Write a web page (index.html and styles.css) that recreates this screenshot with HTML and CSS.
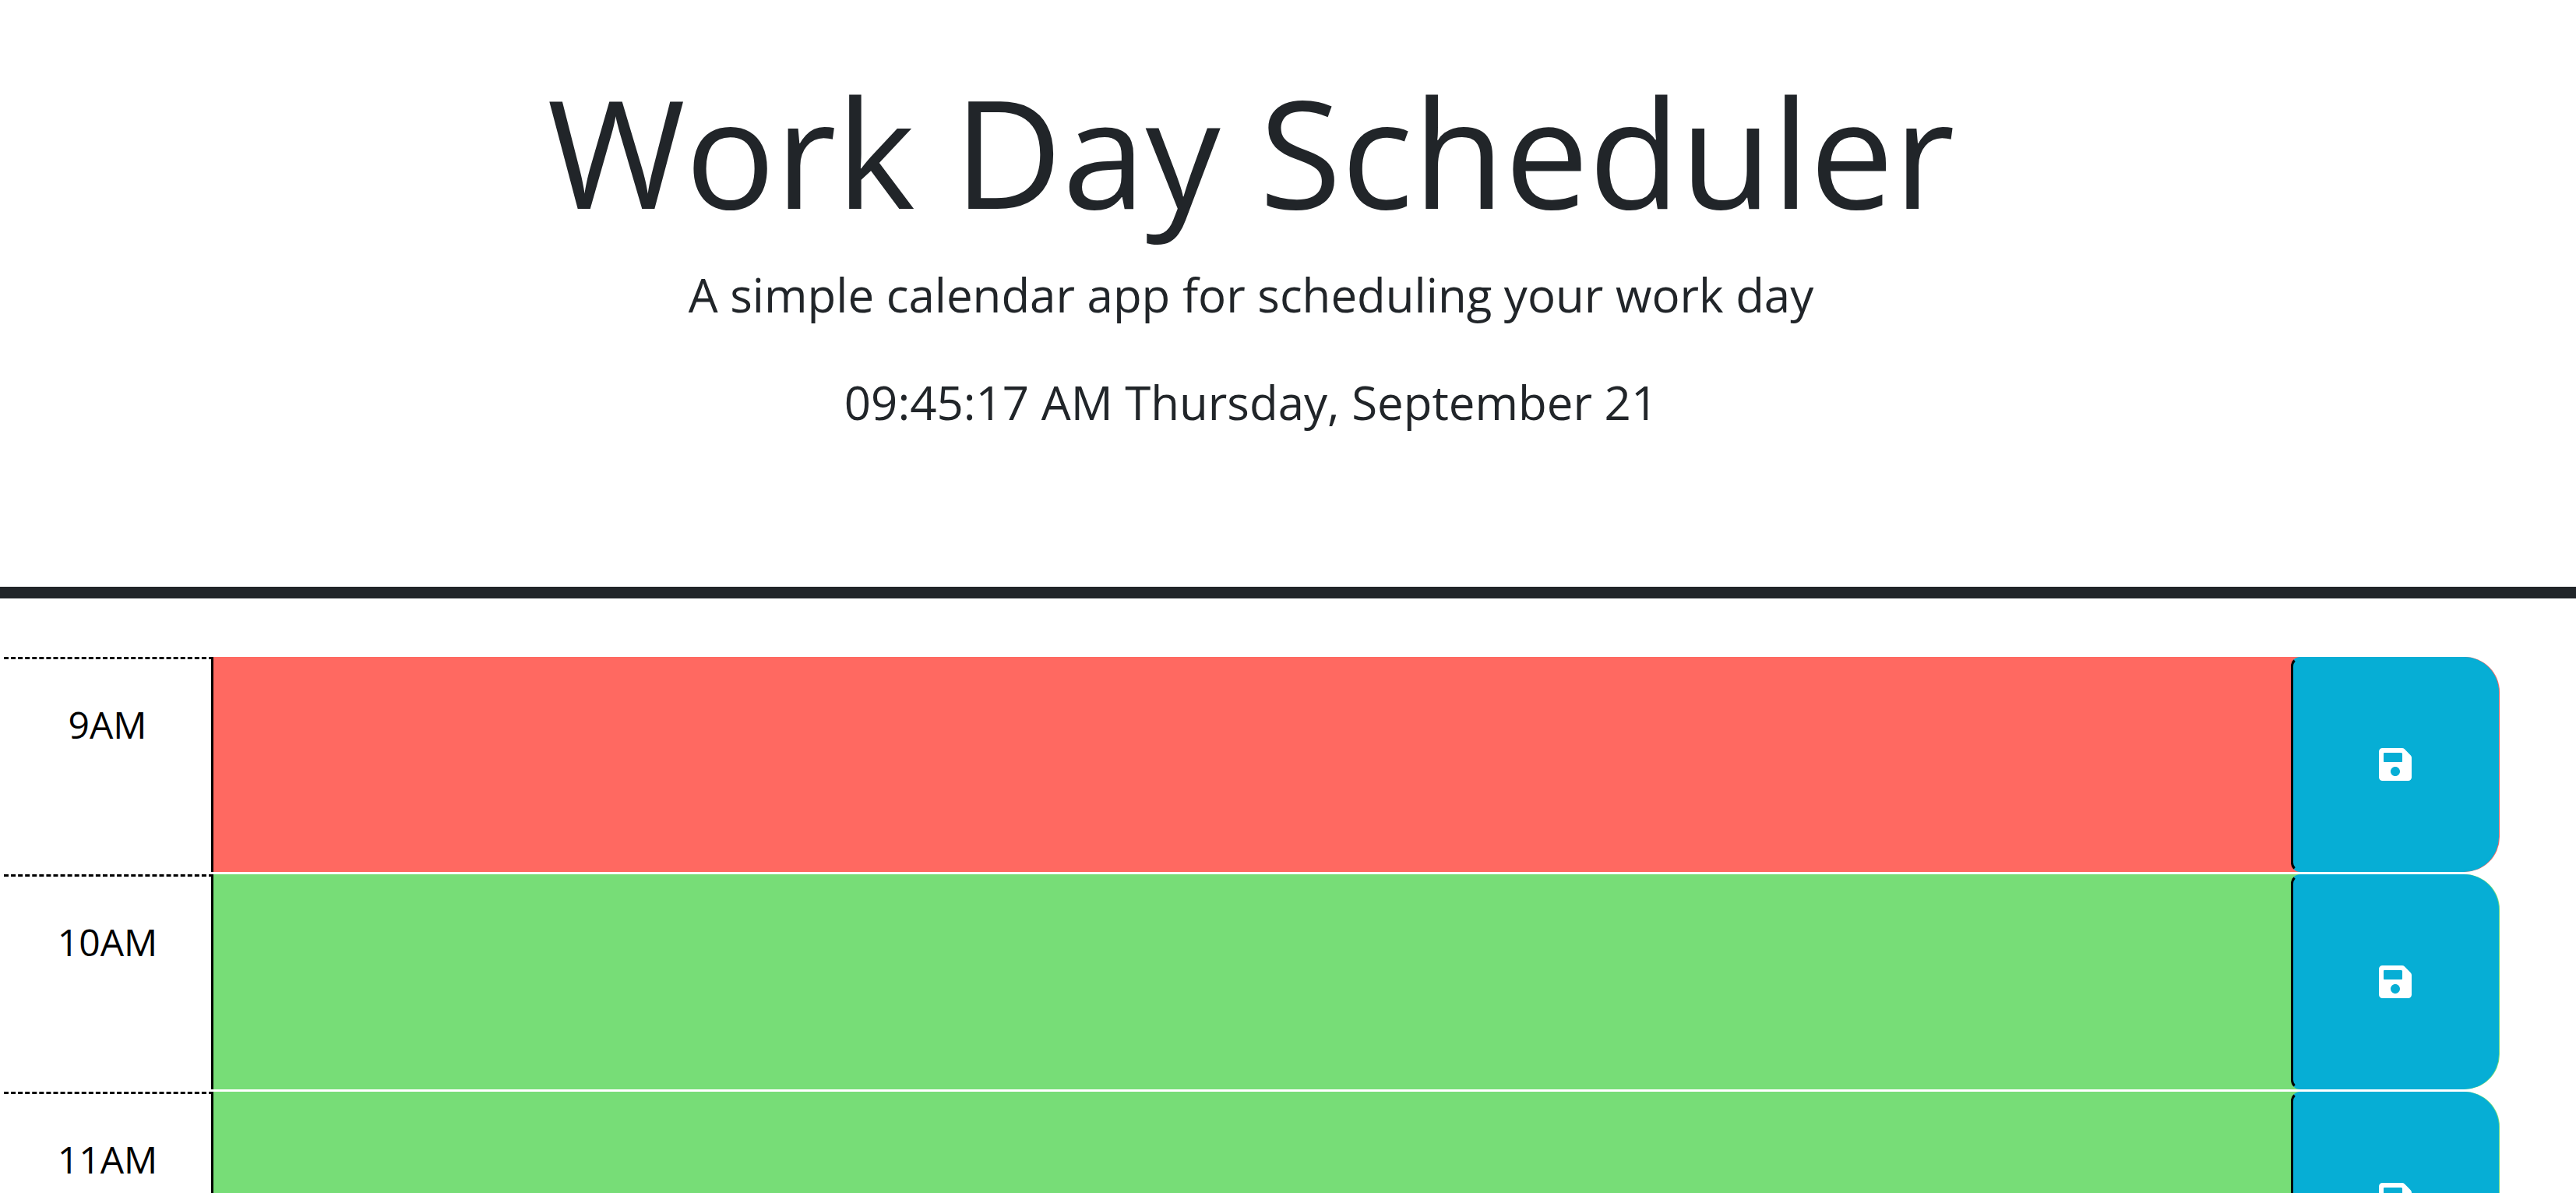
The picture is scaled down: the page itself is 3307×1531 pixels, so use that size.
FILE: index.html
```html
<!DOCTYPE html>
<html lang="en">
<head>
  <meta charset="UTF-8">
  <meta name="viewport" content="width=device-width, initial-scale=1">
  <title>Work Day Scheduler</title>
  <link rel="stylesheet" href="styles.css">
</head>
<body>
  <svg class="sprite" aria-hidden="true">
    <symbol id="save" viewBox="0 32 448 448">
      <path d="M433.941 129.941l-83.882-83.882A48 48 0 0 0 316.118 32H48C21.49 32 0 53.49 0 80v352c0 26.51 21.49 48 48 48h352c26.51 0 48-21.49 48-48V163.882a48 48 0 0 0-14.059-33.941zM224 416c-35.346 0-64-28.654-64-64s28.654-64 64-64 64 28.654 64 64-28.654 64-64 64zm96-304.52V212c0 6.627-5.373 12-12 12H76c-6.627 0-12-5.373-12-12V108c0-6.627 5.373-12 12-12h228.52c3.183 0 6.235 1.264 8.485 3.515l3.48 3.48A11.996 11.996 0 0 1 320 111.48z"/>
    </symbol>
  </svg>

  <header class="header">
    <h1 class="title">Work Day Scheduler</h1>
    <p class="lead">A simple calendar app for scheduling your work day</p>
    <p class="lead">09:45:17 AM Thursday, September 21</p>
  </header>

  <main class="schedule">
    <div class="time-block present">
      <label class="hour" for="hour-9">9AM</label>
      <textarea class="description" id="hour-9"></textarea>
      <button class="save-btn" type="button" aria-label="Save 9AM"><svg class="icon" aria-hidden="true"><use href="#save"/></svg></button>
    </div>
    <div class="time-block future">
      <label class="hour" for="hour-10">10AM</label>
      <textarea class="description" id="hour-10"></textarea>
      <button class="save-btn" type="button" aria-label="Save 10AM"><svg class="icon" aria-hidden="true"><use href="#save"/></svg></button>
    </div>
    <div class="time-block future">
      <label class="hour" for="hour-11">11AM</label>
      <textarea class="description" id="hour-11"></textarea>
      <button class="save-btn" type="button" aria-label="Save 11AM"><svg class="icon" aria-hidden="true"><use href="#save"/></svg></button>
    </div>
  </main>
</body>
</html>
```
FILE: styles.css
```css
* {
  box-sizing: border-box;
}

body {
  margin: 0;
  height: 100vh;
  overflow: hidden;
  background: #fff;
  color: #212529;
  font-family: "Open Sans", sans-serif;
  font-size: 48px;
  line-height: 72px;
}

.sprite {
  display: none;
}

.header {
  padding: 78px 95px 144px 0;
  border-bottom: 15px solid #212529;
  text-align: center;
}

.title {
  margin: 0 0 24px;
  font-size: 192px;
  font-weight: 400;
  line-height: 231px;
}

.lead {
  margin: 0 0 48px;
  font-size: 60px;
  line-height: 90px;
}

.schedule {
  display: flex;
  flex-direction: column;
  gap: 3px;
  padding: 75px 98px 0 5px;
}

.time-block {
  display: flex;
  min-height: 276px;
  border-radius: 0 45px 45px 0;
}

.present {
  background: #ff6961;
}

.future {
  background: #77dd77;
}

.hour {
  flex: 0 0 269px;
  padding-top: 48px;
  border-top: 3px dashed #000;
  border-right: 3px solid #000;
  background: #fff;
  color: #000;
  text-align: center;
}

.description {
  flex: 1;
  min-width: 0;
  padding: 6px;
  border: 0;
  outline: 0;
  background: transparent;
  color: #000;
  font: inherit;
  resize: none;
}

.save-btn {
  display: flex;
  flex: 0 0 267px;
  align-items: center;
  justify-content: center;
  margin-right: 1px;
  padding: 0;
  border: 3px solid #06aed5;
  border-left-color: #000;
  border-radius: 12px 45px 45px 12px;
  background: #06aed5;
  color: #fff;
}

.icon {
  width: 42px;
  height: 42px;
  fill: currentColor;
}
```
